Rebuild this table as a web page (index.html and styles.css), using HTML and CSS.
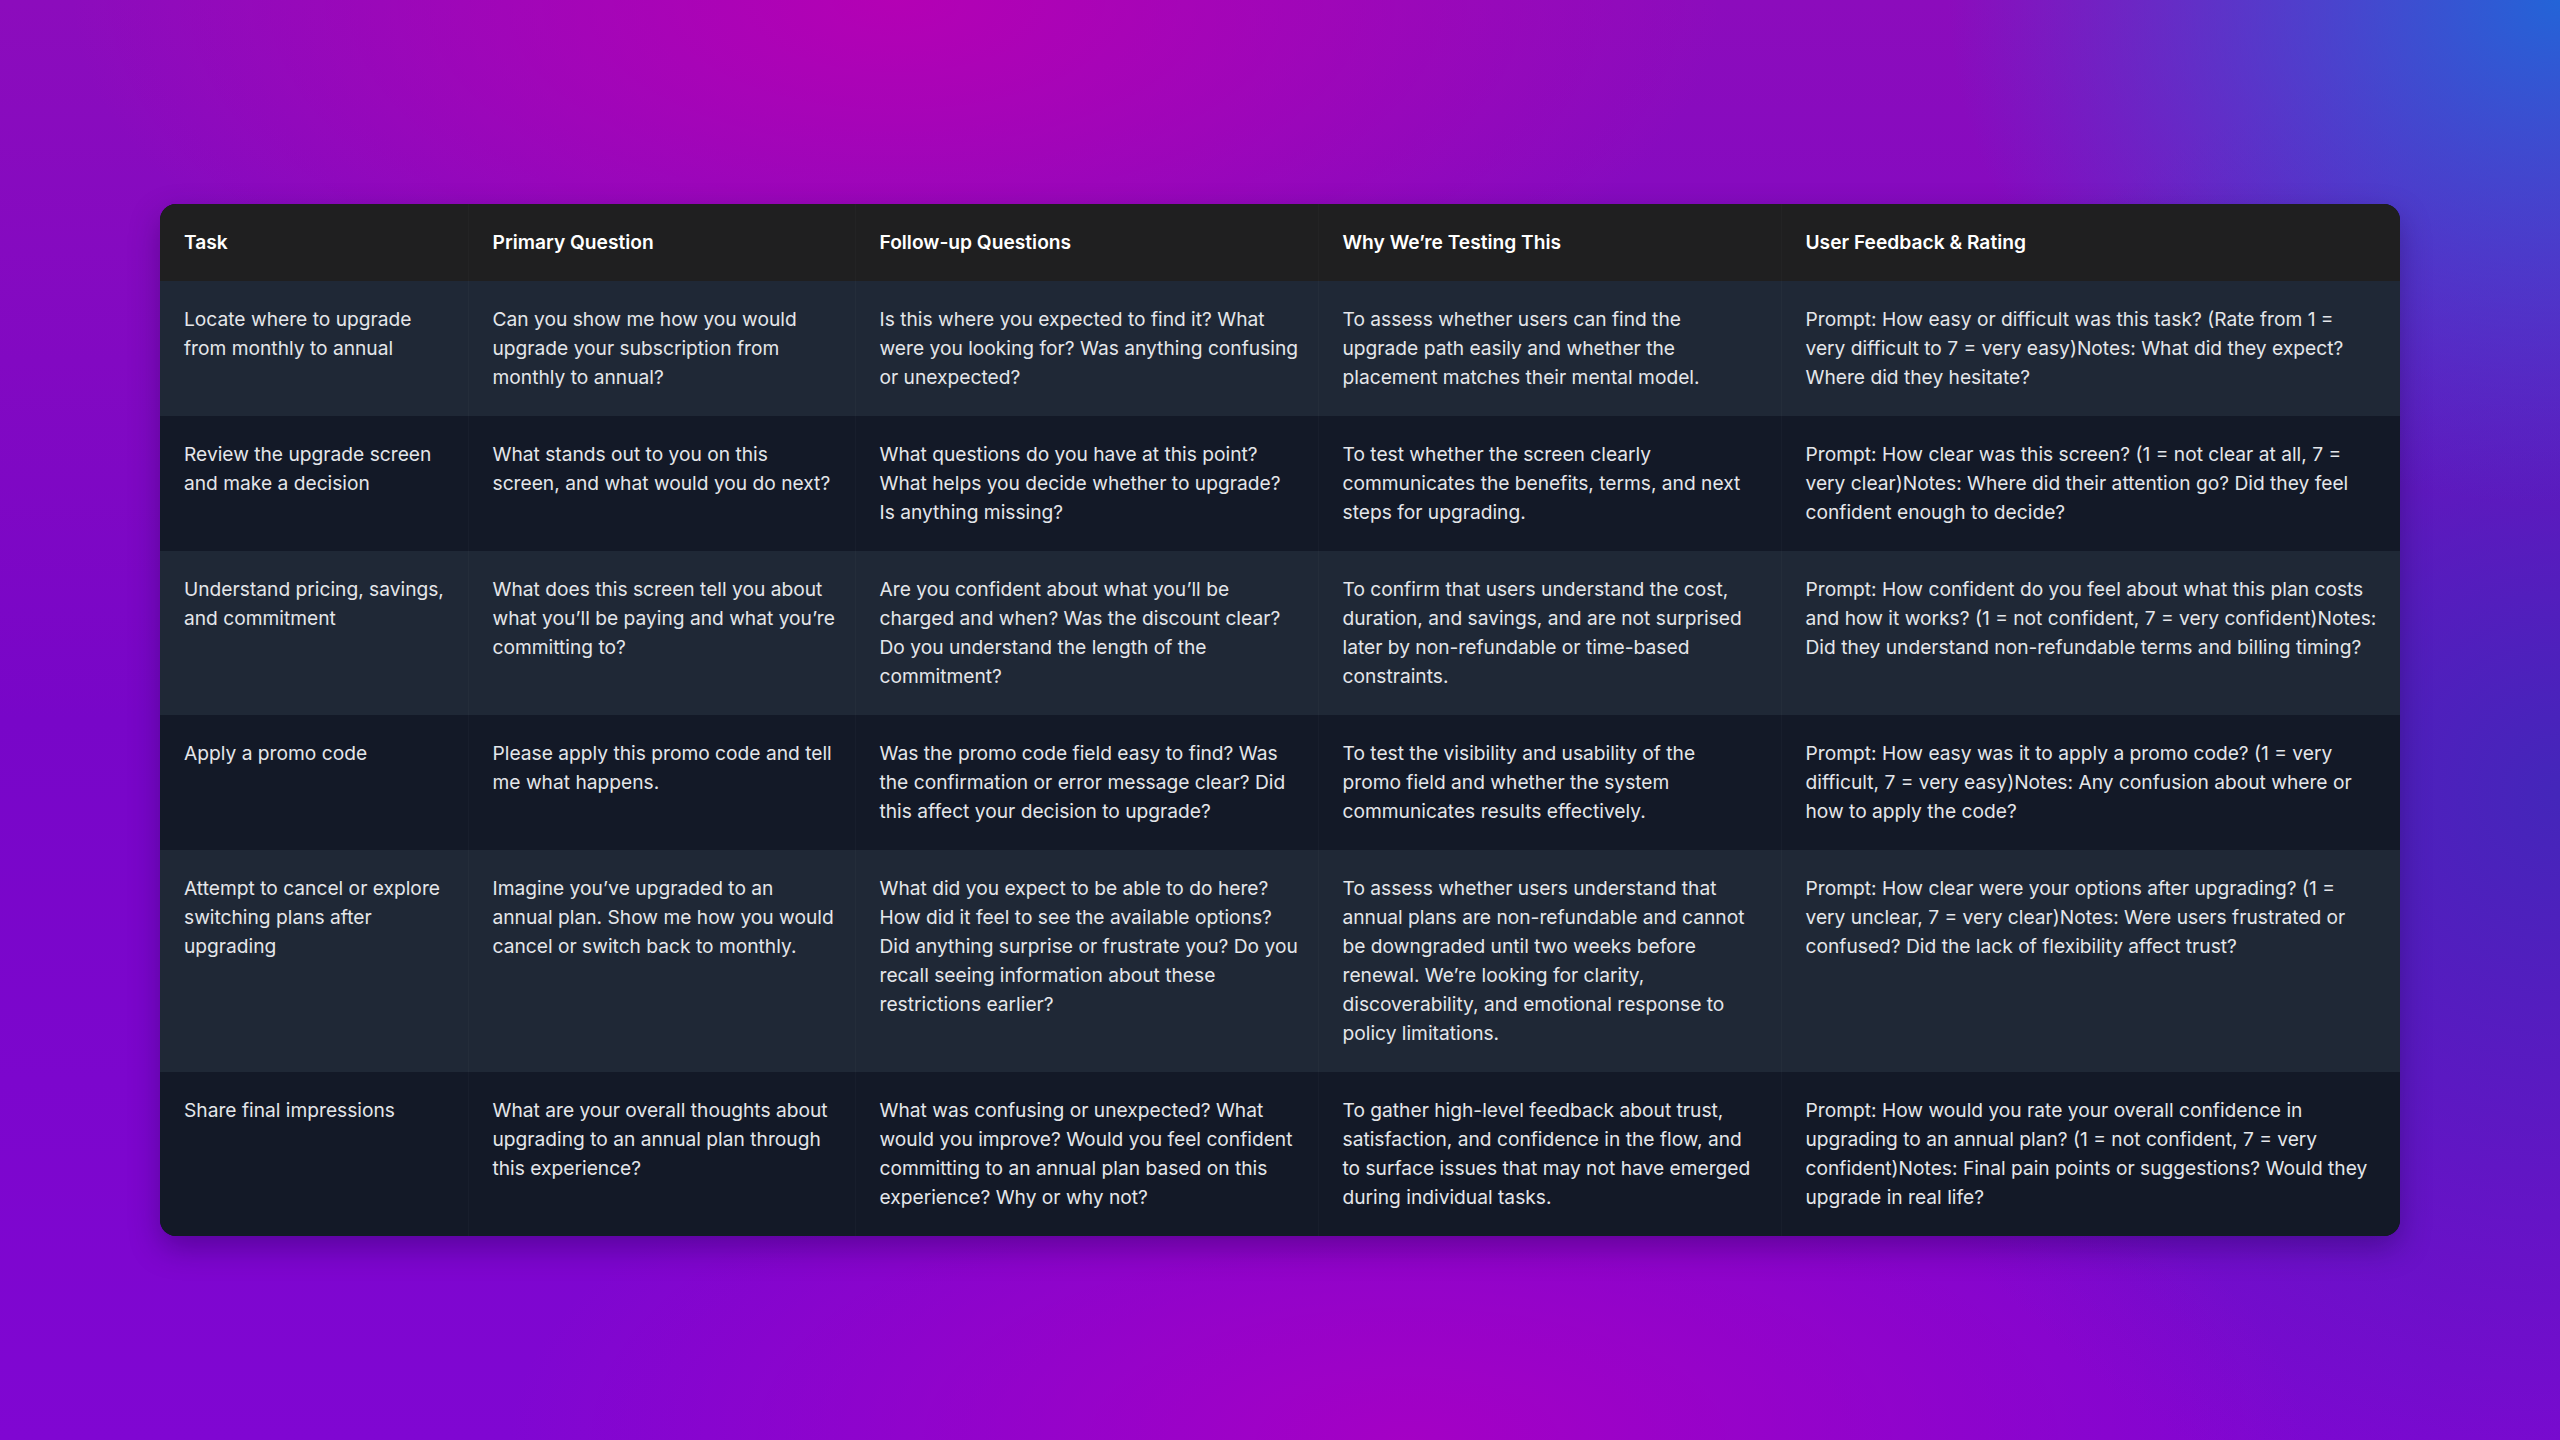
FILE: index.html
```html
<!DOCTYPE html>
<html lang="en">
<head>
<meta charset="utf-8">
<title>Usability Test Plan</title>
<link rel="stylesheet" href="styles.css">
</head>
<body>
<main class="stage">
  <div class="card">
    <table class="plan">
      <colgroup>
        <col class="c1"><col class="c2"><col class="c3"><col class="c4"><col class="c5">
      </colgroup>
      <thead>
        <tr>
          <th>Task</th>
          <th>Primary Question</th>
          <th>Follow-up Questions</th>
          <th>Why We’re Testing This</th>
          <th>User Feedback &amp; Rating</th>
        </tr>
      </thead>
      <tbody>
        <tr>
          <td>Locate where to upgrade from monthly to annual</td>
          <td>Can you show me how you would upgrade your subscription from monthly to annual?</td>
          <td>Is this where you expected to find it? What were you looking for? Was anything confusing or unexpected?</td>
          <td>To assess whether users can find the upgrade path easily and whether the placement matches their mental model.</td>
          <td>Prompt: How easy or difficult was this task? (Rate from 1 = very difficult to 7 = very easy)Notes: What did they expect? Where did they hesitate?</td>
        </tr>
        <tr>
          <td>Review the upgrade screen and make a decision</td>
          <td>What stands out to you on this screen, and what would you do next?</td>
          <td>What questions do you have at this point? What helps you decide whether to upgrade? Is anything missing?</td>
          <td>To test whether the screen clearly communicates the benefits, terms, and next steps for upgrading.</td>
          <td>Prompt: How clear was this screen? (1 = not clear at all, 7 = very clear)Notes: Where did their attention go? Did they feel confident enough to decide?</td>
        </tr>
        <tr>
          <td>Understand pricing, savings, and commitment</td>
          <td>What does this screen tell you about what you’ll be paying and what you’re committing to?</td>
          <td>Are you confident about what you’ll be charged and when? Was the discount clear? Do you understand the length of the commitment?</td>
          <td>To confirm that users understand the cost, duration, and savings, and are not surprised later by non-refundable or time-based constraints.</td>
          <td>Prompt: How confident do you feel about what this plan costs and how it works? (1 = not confident, 7 = very confident)Notes: Did they understand non-refundable terms and billing timing?</td>
        </tr>
        <tr>
          <td>Apply a promo code</td>
          <td>Please apply this promo code and tell me what happens.</td>
          <td>Was the promo code field easy to find? Was the confirmation or error message clear? Did this affect your decision to upgrade?</td>
          <td>To test the visibility and usability of the promo field and whether the system communicates results effectively.</td>
          <td>Prompt: How easy was it to apply a promo code? (1 = very difficult, 7 = very easy)Notes: Any confusion about where or how to apply the code?</td>
        </tr>
        <tr>
          <td>Attempt to cancel or explore switching plans after upgrading</td>
          <td>Imagine you’ve upgraded to an annual plan. Show me how you would cancel or switch back to monthly.</td>
          <td>What did you expect to be able to do here? How did it feel to see the available options? Did anything surprise or frustrate you? Do you recall seeing information about these restrictions earlier?</td>
          <td>To assess whether users understand that annual plans are non-refundable and cannot be downgraded until two weeks before renewal. We’re looking for clarity, discoverability, and emotional response to policy limitations.</td>
          <td>Prompt: How clear were your options after upgrading? (1 = very unclear, 7 = very clear)Notes: Were users frustrated or confused? Did the lack of flexibility affect trust?</td>
        </tr>
        <tr>
          <td>Share final impressions</td>
          <td>What are your overall thoughts about upgrading to an annual plan through this experience?</td>
          <td>What was confusing or unexpected? What would you improve? Would you feel confident committing to an annual plan based on this experience? Why or why not?</td>
          <td>To gather high-level feedback about trust, satisfaction, and confidence in the flow, and to surface issues that may not have emerged during individual tasks.</td>
          <td>Prompt: How would you rate your overall confidence in upgrading to an annual plan? (1 = not confident, 7 = very confident)Notes: Final pain points or suggestions? Would they upgrade in real life?</td>
        </tr>
      </tbody>
    </table>
  </div>
</main>
</body>
</html>
```

FILE: styles.css
```css
html, body {
  margin: 0;
  padding: 0;
}

body {
  width: 2560px;
  height: 1440px;
  overflow: hidden;
  font-family: Inter, "Noto Sans", "Liberation Sans", sans-serif;
  background:
    radial-gradient(ellipse 850px 700px at 100% 0%, rgba(35, 100, 215, 1), rgba(35, 100, 215, 0) 72%),
    radial-gradient(ellipse 1100px 520px at 35% 0%, rgba(182, 0, 180, 0.95), rgba(182, 0, 180, 0) 75%),
    radial-gradient(ellipse 1200px 500px at 55% 100%, rgba(168, 0, 195, 0.9), rgba(168, 0, 195, 0) 75%),
    radial-gradient(ellipse 1000px 1000px at 100% 55%, rgba(65, 40, 185, 0.95), rgba(65, 40, 185, 0) 75%),
    linear-gradient(180deg, #8c0cbc 0%, #7806c8 50%, #8006d2 100%);
}

.stage {
  display: flex;
  justify-content: center;
  padding-top: 204px;
}

.card {
  width: 2240px;
  border-radius: 16px;
  overflow: hidden;
  background: #121826;
  box-shadow: 0 12px 30px rgba(20, 0, 60, 0.35);
}

.plan {
  width: 100%;
  border-collapse: collapse;
  table-layout: fixed;
  font-size: 19.2px;
  line-height: 29px;
  color: #e4e6ea;
}

.c1 { width: 308px; }
.c2 { width: 387px; }
.c3 { width: 463px; }
.c4 { width: 463px; }
.c5 { width: 619px; }

.plan th,
.plan td {
  text-align: left;
  vertical-align: top;
  padding: 24px 16px 24px 24px;
  border-left: 1px solid rgba(255, 255, 255, 0.025);
}

.plan td:nth-child(3) {
  padding-right: 18.5px;
}

.plan td:nth-child(4) {
  padding-right: 26px;
}

.plan td:nth-child(5) {
  padding-right: 21.5px;
}

.plan th:first-child,
.plan td:first-child {
  border-left: none;
}

.plan thead tr {
  background: #1f1f20;
}

.plan th {
  font-weight: 600;
  color: #ffffff;
  border-left-color: rgba(255, 255, 255, 0.02);
}

.plan tbody tr:nth-child(odd) {
  background: #1f2836;
}

.plan tbody tr:nth-child(even) {
  background: #131927;
}
```
